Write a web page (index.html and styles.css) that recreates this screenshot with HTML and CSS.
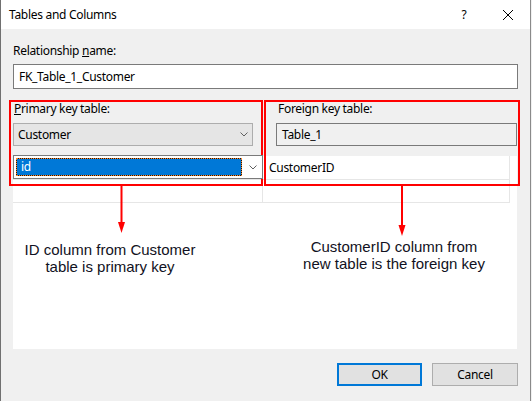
FILE: index.html
```html
<!DOCTYPE html>
<html>
<head>
<meta charset="utf-8">
<link rel="stylesheet" href="styles.css">
</head>
<body>
<div class="window">
  <div class="titlebar">
    <span class="title">Tables and Columns</span>
    <span class="help">?</span>
    <span class="close"><svg width="10" height="10" viewBox="0 0 10 10"><path d="M0 0L10 10M10 0L0 10" stroke="#000" stroke-width="1" fill="none"/></svg></span>
  </div>
  <div class="content">
    <div class="lbl">Relationship <u>n</u>ame:</div>
    <div class="textbox">FK_Table_1_Customer</div>
    <div class="keys">
      <div class="keycol">
        <div class="lbl lbl-pk"><u>P</u>rimary key table:</div>
        <div class="combo"><span>Customer</span><svg class="chev" width="8" height="5" viewBox="0 0 8 5"><path d="M0.5 0.5L4 4L7.5 0.5" stroke="#606060" fill="none"/></svg></div>
      </div>
      <div class="keycol">
        <div class="lbl lbl-fk">Foreign key table:</div>
        <div class="readonly">Table_1</div>
      </div>
    </div>
    <div class="grid">
      <div class="row row1">
        <div class="cell c1">
          <div class="cellcombo"><div class="sel">id</div><svg class="chev" width="8" height="5" viewBox="0 0 8 5"><path d="M0.5 0.5L4 4L7.5 0.5" stroke="#606060" fill="none"/></svg></div>
        </div>
        <div class="cell c2">CustomerID</div>
      </div>
      <div class="row row2">
        <div class="cell c1"></div>
        <div class="cell c2"></div>
      </div>
    </div>
    <div class="buttons">
      <div class="btn ok">OK</div>
      <div class="btn">Cancel</div>
    </div>
  </div>
  <svg class="marks" width="532" height="401" viewBox="0 0 532 401">
    <rect x="10" y="101" width="252" height="84" fill="none" stroke="#ff0000" stroke-width="2"/>
    <rect x="265" y="101" width="254" height="84" fill="none" stroke="#ff0000" stroke-width="2"/>
    <line x1="121.5" y1="186" x2="121.5" y2="225" stroke="#ff0000" stroke-width="2"/>
    <polygon points="118,222 125,222 121.5,233" fill="#ff0000"/>
    <line x1="402" y1="186" x2="402" y2="228" stroke="#ff0000" stroke-width="2"/>
    <polygon points="398.5,225 405.5,225 402,236" fill="#ff0000"/>
  </svg>
  <div class="note note-left">ID column from Customer<br>table is primary key</div>
  <div class="note note-right">CustomerID column from<br>new table is the foreign key</div>
</div>
</body>
</html>
```

FILE: styles.css
```css
* { box-sizing: border-box; }
html, body { margin: 0; padding: 0; }
body {
  background: #f0f0f0;
  font-family: "Noto Sans", "DejaVu Sans", sans-serif;
  font-size: 12px;
  letter-spacing: -0.3px;
  color: #000;
}
.window {
  position: relative;
  width: 531px;
  height: 401px;
  background: #f0f0f0;
  border-left: 1px solid #707070;
  border-right: 1px solid #8a8a8a;
}
.titlebar {
  height: 29px;
  background: #fff;
  display: flex;
  align-items: center;
}
.title {
  padding-left: 8px;
  flex: 1;
}
.help {
  width: 30px;
  text-align: center;
  margin-right: 7px;
}
.close {
  width: 44px;
  display: flex;
  justify-content: center;
}
.close svg { display: block; }
.content {
  padding: 14px 12px 0 12px;
}
.lbl {
  height: 16px;
  line-height: 16px;
}
.textbox {
  margin-top: 5px;
  height: 25px;
  border: 1px solid #7a7a7a;
  background: #fff;
  line-height: 23px;
  padding-left: 5px;
}
.keys {
  margin-top: 12px;
  display: grid;
  grid-template-columns: 240px 241px;
  column-gap: 23px;
}
.lbl-pk { padding-left: 1px; }
.lbl-fk { padding-left: 2px; }
.combo {
  margin-top: 6px;
  height: 23px;
  border: 1px solid #adadad;
  background: #e5e5e5;
  display: flex;
  align-items: center;
  justify-content: space-between;
  padding: 0 4px 0 4px;
}
.chev { display: block; }
.readonly {
  margin-top: 6px;
  height: 23px;
  border: 1px solid #7a7a7a;
  background: #f0f0f0;
  line-height: 21px;
  padding-left: 5px;
}
.grid {
  margin-top: 10px;
  width: 504px;
  height: 193px;
  background: #fff;
}
.row {
  display: flex;
  border-bottom: 1px solid #e6e6e6;
  width: 497px;
}
.row1 { height: 24px; }
.row2 { height: 23px; }
.cell {
  border-right: 1px solid #e6e6e6;
}
.c1 { width: 250px; }
.c2 {
  width: 247px;
  padding-left: 6px;
  line-height: 23px;
}
.cellcombo {
  margin-top: -1px;
  height: 24px;
  width: 250px;
  border: 1px solid #7a7a7a;
  background: #fff;
  display: flex;
  align-items: center;
  padding: 2px 5px 2px 2px;
  position: relative;
  z-index: 1;
}
.sel {
  width: 226px;
  height: 18px;
  margin-right: 7px;
  border: 1px dotted #ff8728;
  background: linear-gradient(#0078d7, #0078d7) padding-box, #1a1a1a border-box;
  color: #fff;
  line-height: 16px;
  padding-left: 4px;
}
.buttons {
  margin-top: 14px;
  display: flex;
  justify-content: flex-end;
  gap: 10px;
}
.btn {
  width: 86px;
  height: 23px;
  border: 1px solid #adadad;
  background: #e1e1e1;
  display: flex;
  align-items: center;
  justify-content: center;
}
.btn.ok {
  width: 85px;
  border: 2px solid #0078d7;
}
.marks {
  position: absolute;
  left: -1px;
  top: 0;
  pointer-events: none;
}
.note {
  position: absolute;
  font-family: "Liberation Sans", Arial, sans-serif;
  font-size: 15px;
  letter-spacing: 0;
  line-height: 17px;
  color: #111122;
  text-align: center;
  white-space: nowrap;
}
.note-left {
  left: 9px;
  width: 200px;
  top: 241px;
}
.note-right {
  left: 283px;
  width: 220px;
  top: 238px;
}
```
